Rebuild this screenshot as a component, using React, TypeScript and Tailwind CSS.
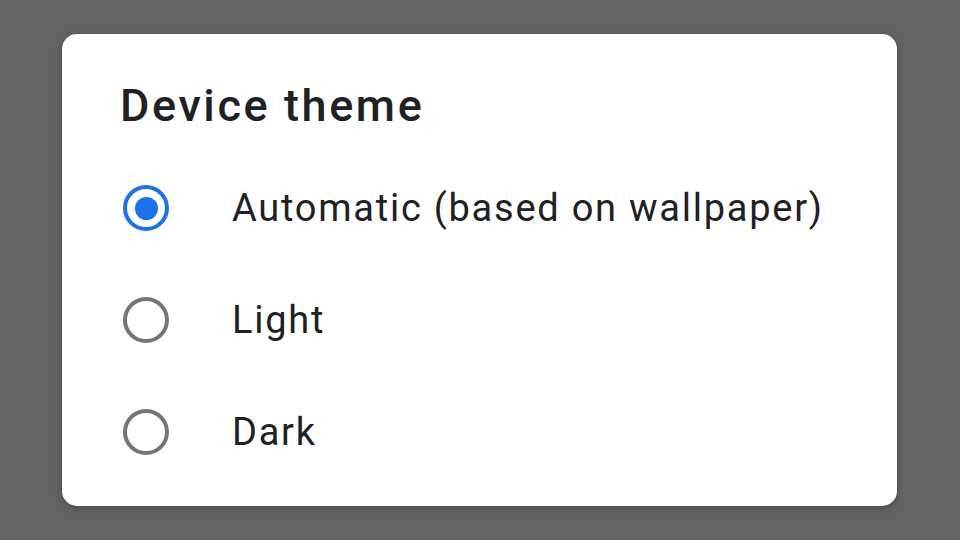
import { useState } from 'react'

const options = ['Automatic (based on wallpaper)', 'Light', 'Dark']

function Radio({ checked }: { checked: boolean }) {
  return checked ? (
    <div className="flex h-[46px] w-[46px] shrink-0 items-center justify-center rounded-full border-[4.5px] border-[#1a73e8]">
      <div className="h-[23px] w-[23px] rounded-full bg-[#1a73e8]" />
    </div>
  ) : (
    <div className="h-[46px] w-[46px] shrink-0 rounded-full border-[4px] border-[#757575]" />
  )
}

export default function App() {
  const [selected, setSelected] = useState(0)

  return (
    <div className="h-[540px] w-[960px] overflow-hidden bg-[#636363] pl-[62px] pt-[34px] font-['Roboto',sans-serif]">
      <div className="flex h-[472px] w-[835px] flex-col rounded-[15px] bg-white shadow-[0_2px_6px_rgba(0,0,0,0.25)]">
        <h2 className="mb-[24px] pl-[58px] pt-[50px] text-[45px] font-medium leading-[44px] tracking-[2.6px] text-[#202124]">
          Device theme
        </h2>
        {options.map((label, i) => (
          <button
            key={label}
            onClick={() => setSelected(i)}
            className="flex h-[112px] items-center gap-[63px] pl-[61px] text-left"
          >
            <Radio checked={selected === i} />
            <span className="text-[38px] tracking-[1.75px] text-[#202124]">{label}</span>
          </button>
        ))}
      </div>
    </div>
  )
}
